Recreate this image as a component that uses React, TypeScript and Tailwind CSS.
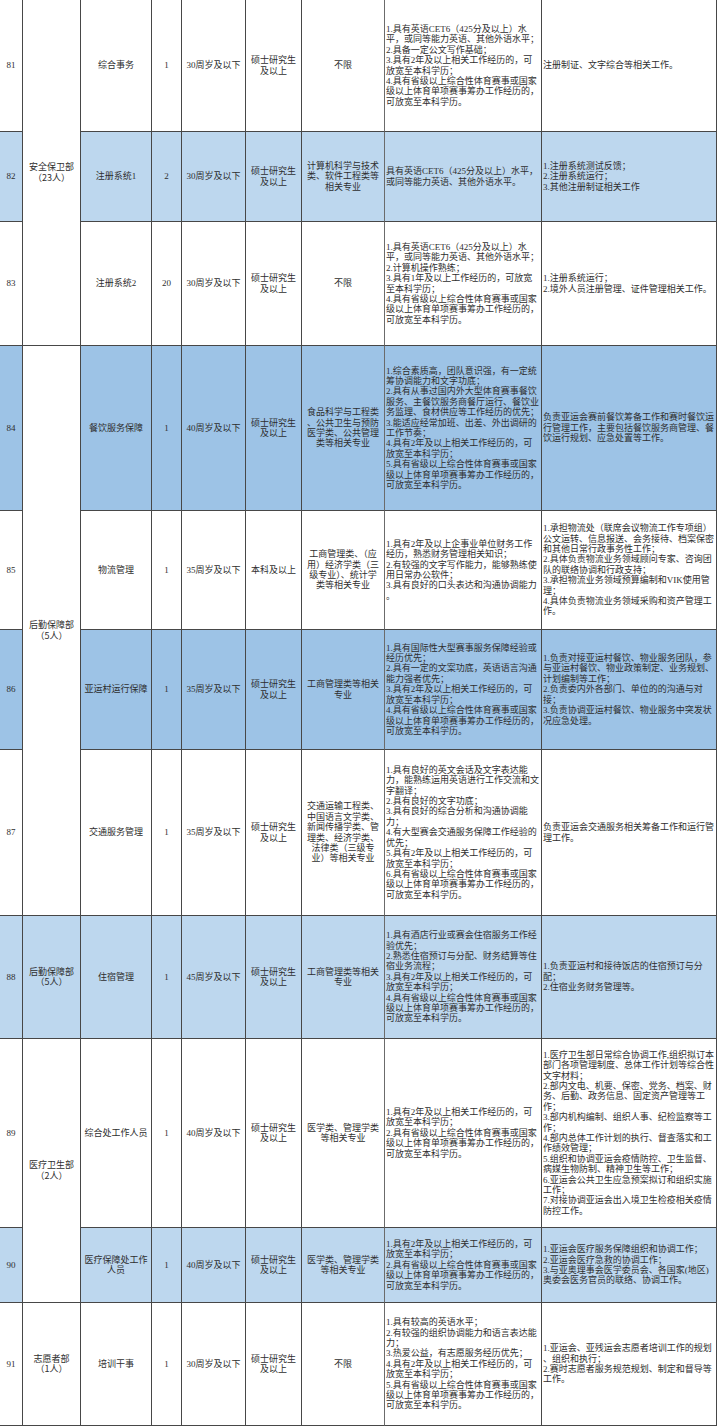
import * as React from 'react';

type Row = {
  no: string;
  dept?: { lines: string[]; span: 1 | 2 | 3 | 4 };
  pos: string[];
  count: string;
  age: string;
  edu: string[];
  major: string[];
  req: string[];
  duty: string[];
  tone: 'white' | 'light' | 'dark';
};

const TONE = {
  white: 'bg-white',
  light: 'bg-[#bdd7ee]',
  dark: 'bg-[#9dc3e6]',
};

const SPAN = {
  1: '',
  2: 'row-span-2',
  3: 'row-span-3',
  4: 'row-span-4',
};

const MASTER = ['硕士研究生', '及以上'];

const WIDEN = [
  '4.具有省级以上综合性体育赛事或国家',
  '级以上体育单项赛事筹办工作经历的，',
  '可放宽至本科学历。',
];

const ROWS: Row[] = [
  {
    no: '81',
    dept: { lines: ['安全保卫部', '（23人）'], span: 3 },
    pos: ['综合事务'],
    count: '1',
    age: '30周岁及以下',
    edu: MASTER,
    major: ['不限'],
    req: [
      '1.具有英语CET6（425分及以上）水',
      '平，或同等能力英语、其他外语水平；',
      '2.具备一定公文写作基础；',
      '3.具有2年及以上相关工作经历的，可',
      '放宽至本科学历；',
      ...WIDEN,
    ],
    duty: ['注册制证、文字综合等相关工作。'],
    tone: 'white',
  },
  {
    no: '82',
    pos: ['注册系统1'],
    count: '2',
    age: '30周岁及以下',
    edu: MASTER,
    major: ['计算机科学与技术', '类、软件工程类等', '相关专业'],
    req: ['具有英语CET6（425分及以上）水平，', '或同等能力英语、其他外语水平。'],
    duty: ['1.注册系统测试反馈；', '2.注册系统运行；', '3.其他注册制证相关工作'],
    tone: 'light',
  },
  {
    no: '83',
    pos: ['注册系统2'],
    count: '20',
    age: '30周岁及以下',
    edu: MASTER,
    major: ['不限'],
    req: [
      '1.具有英语CET6（425分及以上）水',
      '平，或同等能力英语、其他外语水平；',
      '2.计算机操作熟练；',
      '3.具有1年及以上工作经历的，可放宽',
      '至本科学历；',
      ...WIDEN,
    ],
    duty: ['1.注册系统运行；', '2.境外人员注册管理、证件管理相关工作。'],
    tone: 'white',
  },
  {
    no: '84',
    dept: { lines: ['后勤保障部', '（5人）'], span: 4 },
    pos: ['餐饮服务保障'],
    count: '1',
    age: '40周岁及以下',
    edu: MASTER,
    major: ['食品科学与工程类', '、公共卫生与预防', '医学类、公共管理', '类等相关专业'],
    req: [
      '1.综合素质高，团队意识强，有一定统',
      '筹协调能力和文字功底；',
      '2.具有从事过国内外大型体育赛事餐饮',
      '服务、主餐饮服务商餐厅运行、餐饮业',
      '务监理、食材供应等工作经历的优先；',
      '3.能适应经常加班、出差、外出调研的',
      '工作节奏；',
      '4.具有2年及以上相关工作经历的，可',
      '放宽至本科学历；',
      '5.具有省级以上综合性体育赛事或国家',
      '级以上体育单项赛事筹办工作经历的，',
      '可放宽至本科学历。',
    ],
    duty: [
      '负责亚运会赛前餐饮筹备工作和赛时餐饮运',
      '行管理工作，主要包括餐饮服务商管理、餐',
      '饮运行规划、应急处置等工作。',
    ],
    tone: 'dark',
  },
  {
    no: '85',
    pos: ['物流管理'],
    count: '1',
    age: '35周岁及以下',
    edu: ['本科及以上'],
    major: ['工商管理类、（应', '用）经济学类（三', '级专业）、统计学', '类等相关专业'],
    req: [
      '1.具有2年及以上企事业单位财务工作',
      '经历，熟悉财务管理相关知识；',
      '2.有较强的文字写作能力，能够熟练使',
      '用日常办公软件；',
      '3.具有良好的口头表达和沟通协调能力',
      '。',
    ],
    duty: [
      '1.承担物流处（联席会议物流工作专项组）',
      '公文运转、信息报送、会务接待、档案保密',
      '和其他日常行政事务性工作；',
      '2.具体负责物流业务领域顾问专家、咨询团',
      '队的联络协调和行政支持；',
      '3.承担物流业务领域预算编制和VIK使用管',
      '理；',
      '4.具体负责物流业务领域采购和资产管理工',
      '作。',
    ],
    tone: 'white',
  },
  {
    no: '86',
    pos: ['亚运村运行保障'],
    count: '1',
    age: '35周岁及以下',
    edu: MASTER,
    major: ['工商管理类等相关', '专业'],
    req: [
      '1.具有国际性大型赛事服务保障经验或',
      '经历优先；',
      '2.具有一定的文案功底，英语语言沟通',
      '能力强者优先；',
      '3.具有2年及以上相关工作经历的，可',
      '放宽至本科学历；',
      ...WIDEN,
    ],
    duty: [
      '1.负责对接亚运村餐饮、物业服务团队，参',
      '与亚运村餐饮、物业政策制定、业务规划、',
      '计划编制等工作；',
      '2.负责委内外各部门、单位的的沟通与对',
      '接；',
      '3.负责协调亚运村餐饮、物业服务中突发状',
      '况应急处理。',
    ],
    tone: 'dark',
  },
  {
    no: '87',
    pos: ['交通服务管理'],
    count: '1',
    age: '35周岁及以下',
    edu: MASTER,
    major: [
      '交通运输工程类、',
      '中国语言文学类、',
      '新闻传播学类、管',
      '理类、经济学类、',
      '法律类（三级专',
      '业）等相关专业',
    ],
    req: [
      '1.具有良好的英文会话及文字表达能',
      '力，能熟练运用英语进行工作交流和文',
      '字翻译；',
      '2.具有良好的文字功底；',
      '3.具有良好的综合分析和沟通协调能',
      '力；',
      '4.有大型赛会交通服务保障工作经验的',
      '优先；',
      '5.具有2年及以上相关工作经历的，可',
      '放宽至本科学历；',
      '6.具有省级以上综合性体育赛事或国家',
      '级以上体育单项赛事筹办工作经历的，',
      '可放宽至本科学历。',
    ],
    duty: ['负责亚运会交通服务相关筹备工作和运行管', '理工作。'],
    tone: 'white',
  },
  {
    no: '88',
    dept: { lines: ['后勤保障部', '（5人）'], span: 1 },
    pos: ['住宿管理'],
    count: '1',
    age: '45周岁及以下',
    edu: MASTER,
    major: ['工商管理类等相关', '专业'],
    req: [
      '1.具有酒店行业或赛会住宿服务工作经',
      '验优先；',
      '2.熟悉住宿预订与分配、财务结算等住',
      '宿业务流程；',
      '3.具有2年及以上相关工作经历的，可',
      '放宽至本科学历；',
      ...WIDEN,
    ],
    duty: ['1.负责亚运村和接待饭店的住宿预订与分', '配；', '2.住宿业务财务管理等。'],
    tone: 'light',
  },
  {
    no: '89',
    dept: { lines: ['医疗卫生部', '（2人）'], span: 2 },
    pos: ['综合处工作人员'],
    count: '1',
    age: '40周岁及以下',
    edu: MASTER,
    major: ['医学类、管理学类', '等相关专业'],
    req: [
      '1.具有2年及以上相关工作经历的，可',
      '放宽至本科学历；',
      '2.具有省级以上综合性体育赛事或国家',
      '级以上体育单项赛事筹办工作经历的，',
      '可放宽至本科学历。',
    ],
    duty: [
      '1.医疗卫生部日常综合协调工作,组织拟订本',
      '部门各项管理制度、总体工作计划等综合性',
      '文字材料；',
      '2.部内文电、机要、保密、党务、档案、财',
      '务、后勤、政务信息、固定资产管理等工',
      '作；',
      '3.部内机构编制、组织人事、纪检监察等工',
      '作；',
      '4.部内总体工作计划的执行、督查落实和工',
      '作绩效管理；',
      '5.组织和协调亚运会疫情防控、卫生监督、',
      '病媒生物防制、精神卫生等工作；',
      '6.亚运会公共卫生应急预案拟订和组织实施',
      '工作；',
      '7.对接协调亚运会出入境卫生检疫相关疫情',
      '防控工作。',
    ],
    tone: 'white',
  },
  {
    no: '90',
    pos: ['医疗保障处工作', '人员'],
    count: '1',
    age: '40周岁及以下',
    edu: MASTER,
    major: ['医学类、管理学类', '等相关专业'],
    req: [
      '1.具有2年及以上相关工作经历的，可',
      '放宽至本科学历；',
      '2.具有省级以上综合性体育赛事或国家',
      '级以上体育单项赛事筹办工作经历的，',
      '可放宽至本科学历。',
    ],
    duty: [
      '1.亚运会医疗服务保障组织和协调工作；',
      '2.亚运会医疗急救的协调工作；',
      '3.与亚奥理事会医学委员会、各国家(地区)',
      '奥委会医务官员的联络、协调工作。',
    ],
    tone: 'light',
  },
  {
    no: '91',
    dept: { lines: ['志愿者部', '（1人）'], span: 1 },
    pos: ['培训干事'],
    count: '1',
    age: '30周岁及以下',
    edu: MASTER,
    major: ['不限'],
    req: [
      '1.具有较高的英语水平；',
      '2.有较强的组织协调能力和语言表达能',
      '力；',
      '3.热爱公益，有志愿服务经历优先；',
      '4.具有2年及以上相关工作经历的，可',
      '放宽至本科学历；',
      '5.具有省级以上综合性体育赛事或国家',
      '级以上体育单项赛事筹办工作经历的，',
      '可放宽至本科学历。',
    ],
    duty: [
      '1.亚运会、亚残运会志愿者培训工作的规划',
      '、组织和执行；',
      '2.赛时志愿者服务规范规划、制定和督导等',
      '工作。',
    ],
    tone: 'white',
  },
];

function Lines({ lines }: { lines: string[] }) {
  return (
    <>
      {lines.map((l, i) => (
        <div key={i} className="whitespace-nowrap">
          {l}
        </div>
      ))}
    </>
  );
}

const CENTER =
  'flex flex-col items-center justify-center text-center border-r border-b border-[#474747] overflow-hidden';
const LEFT =
  'flex flex-col items-start justify-center pl-[1px] border-r border-b border-[#474747] overflow-hidden';

export default function App() {
  return (
    <div className="min-h-[1428px] w-[720px] bg-white">
      <div className="grid w-[717px] grid-cols-[23px_58px_71px_30px_64px_56px_83px_157px_175px] grid-rows-[132px_90px_124px_165px_119px_120px_166px_123px_189px_75px_123px] font-['Liberation_Serif','Noto_Sans_CJK_SC',serif] text-[9px] leading-[10.4px] text-[#2e2e2e]">
        {ROWS.map((r) => {
          const bg = TONE[r.tone];
          return (
            <React.Fragment key={r.no}>
              <div className={`${CENTER} ${bg}`}>{r.no}</div>
              {r.dept && (
                <div className={`${CENTER} ${SPAN[r.dept.span]} ${r.dept.span === 1 ? bg : 'bg-white'} font-['Noto_Sans_CJK_SC',sans-serif]`}>
                  <Lines lines={r.dept.lines} />
                </div>
              )}
              <div className={`${CENTER} ${bg}`}>
                <Lines lines={r.pos} />
              </div>
              <div className={`${CENTER} ${bg}`}>{r.count}</div>
              <div className={`${CENTER} ${bg}`}>{r.age}</div>
              <div className={`${CENTER} ${bg}`}>
                <Lines lines={r.edu} />
              </div>
              <div className={`${CENTER} ${bg} border-r-[#6b6b6b]`}>
                <Lines lines={r.major} />
              </div>
              <div className={`${LEFT} ${bg}`}>
                <Lines lines={r.req} />
              </div>
              <div className={`${LEFT} ${bg}`}>
                <Lines lines={r.duty} />
              </div>
            </React.Fragment>
          );
        })}
      </div>
    </div>
  );
}
